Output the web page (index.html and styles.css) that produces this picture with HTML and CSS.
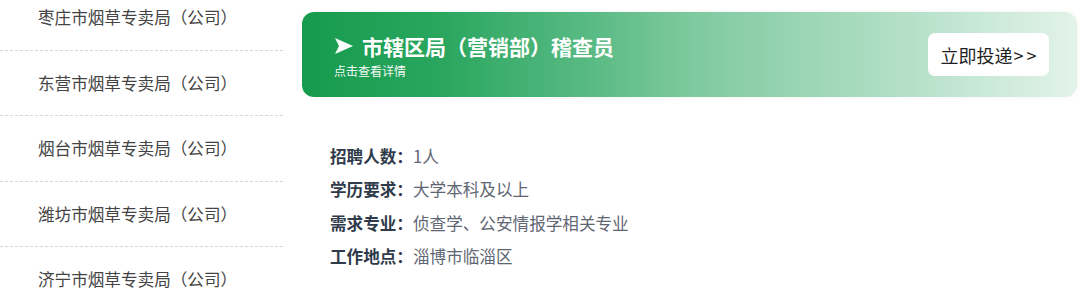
FILE: index.html
```html
<!DOCTYPE html>
<html lang="zh">
<head>
<meta charset="utf-8">
<link rel="stylesheet" href="styles.css">
</head>
<body>
<div class="page">
  <ul class="side">
    <li class="side-item">枣庄市烟草专卖局（公司）</li>
    <li class="side-item">东营市烟草专卖局（公司）</li>
    <li class="side-item">烟台市烟草专卖局（公司）</li>
    <li class="side-item">潍坊市烟草专卖局（公司）</li>
    <li class="side-item">济宁市烟草专卖局（公司）</li>
  </ul>
  <div class="main">
    <div class="banner">
      <div class="banner-text">
        <div class="title">
          <svg class="arrow" width="20" height="18" viewBox="0 0 20 18"><path d="M1 1 L19 9 L1 17 L5 9 Z" fill="#fff"/></svg>
          <span>市辖区局（营销部）稽查员</span>
        </div>
        <div class="sub">点击查看详情</div>
      </div>
      <div class="btn">立即投递<span class="gt">&gt;&gt;</span></div>
    </div>
    <div class="details">
      <div class="row"><span class="label">招聘人数：</span><span class="val">1人</span></div>
      <div class="row"><span class="label">学历要求：</span><span class="val">大学本科及以上</span></div>
      <div class="row"><span class="label">需求专业：</span><span class="val">侦查学、公安情报学相关专业</span></div>
      <div class="row"><span class="label">工作地点：</span><span class="val">淄博市临淄区</span></div>
    </div>
  </div>
</div>
</body>
</html>
```

FILE: styles.css
```css
* { box-sizing: border-box; }
html, body { margin: 0; padding: 0; background: #fff; }
body {
  width: 1080px;
  height: 300px;
  overflow: hidden;
  font-family: "Noto Sans CJK SC", "Microsoft YaHei", sans-serif;
  text-spacing-trim: space-all;
}
.page {
  display: flex;
  align-items: flex-start;
  gap: 19px;
}
.side {
  list-style: none;
  margin: -15px 0 0 0;
  padding: 0;
  width: 283px;
  flex: none;
}
.side-item {
  height: 65.5px;
  display: flex;
  align-items: center;
  padding-left: 38px;
  font-size: 16.6px;
  color: #444;
  border-bottom: 1px dashed #d6d6d6;
}
.main {
  flex: 1;
  padding-top: 12px;
  padding-right: 3px;
}
.banner {
  height: 85px;
  border-radius: 12px;
  background: linear-gradient(90deg, #159b4d 0%, #2aa65f 18%, #5bbb85 38%, #80caa0 51%, #b2dfc6 77%, #e3f3ea 100%);
  display: flex;
  align-items: center;
  justify-content: space-between;
  padding: 0 28px 0 32px;
  box-shadow: 0 0 6px rgba(0,0,0,0.05);
}
.banner-text {
  display: flex;
  flex-direction: column;
  gap: 3px;
  padding-top: 2px;
}
.title {
  display: flex;
  align-items: center;
  gap: 8px;
  color: #fff;
  font-size: 21px;
  font-weight: 700;
  line-height: 28px;
}
.arrow { flex: none; }
.sub {
  color: #fff;
  font-size: 12px;
  line-height: 16px;
  opacity: 0.95;
}
.btn {
  background: #fff;
  border-radius: 7px;
  height: 43px;
  width: 121px;
  display: flex;
  align-items: center;
  justify-content: center;
  font-size: 18px;
  color: #1f1f1f;
}
.gt {
  letter-spacing: 3px;
  margin-left: 1px;
  margin-right: -3px;
}
.details {
  padding: 42px 0 0 28px;
  display: flex;
  flex-direction: column;
}
.row {
  height: 33.5px;
  display: flex;
  align-items: center;
  font-size: 16.6px;
}
.label {
  font-weight: 700;
  color: #2f3a4a;
  width: 83px;
  flex: none;
  white-space: nowrap;
}
.val {
  color: #5f6673;
}
```
